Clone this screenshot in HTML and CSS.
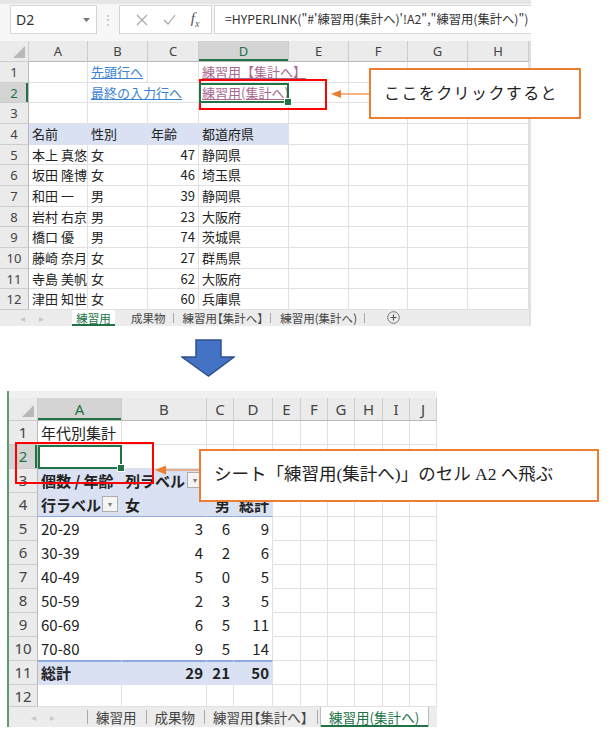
FILE: index.html
```html
<!DOCTYPE html>
<html lang="ja">
<head>
    <meta charset="UTF-8">
    <title>HYPERLINK 練習用</title>
    <link rel="stylesheet" href="styles.css">
</head>
<body>

    <!-- Before: sheet 練習用 with the link -->
    <div class="shot shot-top">
        <div class="fbar">
            <div class="namebox">D2
                <svg class="caret" width="7" height="4" viewBox="0 0 7 4"><path d="M0 0h7L3.5 4z" fill="#777"/></svg>
            </div>
            <div class="fdots">⋮</div>
            <div class="fbtns">
                <svg width="12" height="12" viewBox="0 0 12 12"><path d="M1 1l10 10M11 1L1 11" stroke="#a8a8a8" stroke-width="1.2" fill="none"/></svg>
                <svg width="13" height="11" viewBox="0 0 13 11"><path d="M1 6l4 4 7-9" stroke="#a8a8a8" stroke-width="1.2" fill="none"/></svg>
                <span class="fx">f<sub>x</sub></span>
            </div>
            <div class="formula">=HYPERLINK("#'練習用(集計へ)'!A2","練習用(集計へ)")</div>
        </div>

        <div class="sheet sheet-top">
            <div class="corner"></div><div class="ch">A</div><div class="ch">B</div><div class="ch">C</div><div class="ch on">D</div><div class="ch">E</div><div class="ch">F</div><div class="ch">G</div><div class="ch">H</div>

            <div class="rh">1</div><div></div><div><span class="link">先頭行へ</span></div><div></div><div class="span2"><span class="visited">練習用【集計へ】</span></div><div></div><div></div><div></div>
            <div class="rh on">2</div><div></div><div class="span2"><span class="link">最終の入力行へ</span></div><div class="active"><span class="visited">練習用(集計へ)</span></div><div></div><div></div><div></div><div></div>
            <div class="rh">3</div><div></div><div></div><div></div><div></div><div></div><div></div><div></div><div></div>
            <div class="rh">4</div><div class="th">名前</div><div class="th">性別</div><div class="th">年齢</div><div class="th">都道府県</div><div></div><div></div><div></div><div></div>
            <div class="rh">5</div><div>本上 真悠子</div><div>女</div><div class="num">47</div><div>静岡県</div><div></div><div></div><div></div><div></div>
            <div class="rh">6</div><div>坂田 隆博</div><div>女</div><div class="num">46</div><div>埼玉県</div><div></div><div></div><div></div><div></div>
            <div class="rh">7</div><div>和田 一</div><div>男</div><div class="num">39</div><div>静岡県</div><div></div><div></div><div></div><div></div>
            <div class="rh">8</div><div>岩村 右京</div><div>男</div><div class="num">23</div><div>大阪府</div><div></div><div></div><div></div><div></div>
            <div class="rh">9</div><div>橋口 優</div><div>男</div><div class="num">74</div><div>茨城県</div><div></div><div></div><div></div><div></div>
            <div class="rh">10</div><div>藤崎 奈月</div><div>女</div><div class="num">27</div><div>群馬県</div><div></div><div></div><div></div><div></div>
            <div class="rh">11</div><div>寺島 美帆</div><div>女</div><div class="num">62</div><div>大阪府</div><div></div><div></div><div></div><div></div>
            <div class="rh">12</div><div>津田 知世</div><div>女</div><div class="num">60</div><div>兵庫県</div><div></div><div></div><div></div><div></div>
        </div>

        <div class="tabs tabs-top">
            <div class="tab-nav"><span>◂</span><span>▸</span></div>
            <div class="tab current">練習用</div>
            <div class="tab">成果物</div>
            <div class="tab">練習用【集計へ】</div>
            <div class="tab">練習用(集計へ)</div>
            <div class="tab-add">
                <svg width="13" height="13" viewBox="0 0 13 13"><circle cx="6.5" cy="6.5" r="5.8" stroke="#777" fill="none"/><path d="M6.5 3.5v6M3.5 6.5h6" stroke="#555" stroke-width="1.2"/></svg>
            </div>
        </div>

        <!-- annotations -->
        <div class="redbox redbox-1"></div>
        <svg class="pointer pointer-1" width="40" height="10" viewBox="0 0 40 10"><path d="M0 5l10-4v8z" fill="#ed7d31"/><path d="M9 5h31" stroke="#ed7d31" stroke-width="1.2"/></svg>
        <div class="callout callout-1">ここをクリックすると</div>
    </div>

    <div class="down-arrow">
        <svg width="54" height="38" viewBox="0 0 54 38"><polygon points="15,1 40,1 40,18 53,18 27.5,37 1,18 15,18" fill="#4472c4" stroke="#2f528f" stroke-width="1.5"/></svg>
    </div>

    <!-- After: sheet 練習用(集計へ) -->
    <div class="shot shot-bottom">
        <div class="sheet-strip"></div>
        <div class="sheet sheet-bottom">
            <div class="corner"></div><div class="ch on">A</div><div class="ch">B</div><div class="ch">C</div><div class="ch">D</div><div class="ch">E</div><div class="ch">F</div><div class="ch">G</div><div class="ch">H</div><div class="ch">I</div><div class="ch">J</div>

            <div class="rh">1</div><div>年代別集計</div><div></div><div></div><div></div><div></div><div></div><div></div><div></div><div></div><div></div>
            <div class="rh on">2</div><div class="active"></div><div></div><div></div><div></div><div></div><div></div><div></div><div></div><div></div><div></div>
            <div class="rh">3</div><div class="pv-h b">個数 / 年齢</div><div class="pv-h b drop">列ラベル<span class="pv-btn">▾</span></div><div class="pv-h"></div><div class="pv-h end"></div><div></div><div></div><div></div><div></div><div></div><div></div>
            <div class="rh">4</div><div class="pv-h pv-line b drop">行ラベル<span class="pv-btn">▾</span></div><div class="pv-h pv-line b">女</div><div class="pv-h pv-line b num">男</div><div class="pv-h pv-line end b num">総計</div><div></div><div></div><div></div><div></div><div></div><div></div>
            <div class="rh">5</div><div class="pv">20-29</div><div class="pv num">3</div><div class="pv num">6</div><div class="pv end num">9</div><div></div><div></div><div></div><div></div><div></div><div></div>
            <div class="rh">6</div><div class="pv">30-39</div><div class="pv num">4</div><div class="pv num">2</div><div class="pv end num">6</div><div></div><div></div><div></div><div></div><div></div><div></div>
            <div class="rh">7</div><div class="pv">40-49</div><div class="pv num">5</div><div class="pv num">0</div><div class="pv end num">5</div><div></div><div></div><div></div><div></div><div></div><div></div>
            <div class="rh">8</div><div class="pv">50-59</div><div class="pv num">2</div><div class="pv num">3</div><div class="pv end num">5</div><div></div><div></div><div></div><div></div><div></div><div></div>
            <div class="rh">9</div><div class="pv">60-69</div><div class="pv num">6</div><div class="pv num">5</div><div class="pv end num">11</div><div></div><div></div><div></div><div></div><div></div><div></div>
            <div class="rh">10</div><div class="pv pv-last">70-80</div><div class="pv pv-last num">9</div><div class="pv pv-last num">5</div><div class="pv pv-last end num">14</div><div></div><div></div><div></div><div></div><div></div><div></div>
            <div class="rh">11</div><div class="pv-t b">総計</div><div class="pv-t b num">29</div><div class="pv-t b num">21</div><div class="pv-t end b num">50</div><div></div><div></div><div></div><div></div><div></div><div></div>
            <div class="rh">12</div><div></div><div></div><div></div><div></div><div></div><div></div><div></div><div></div><div></div><div></div>
        </div>

        <div class="tabs tabs-bottom">
            <div class="tab-nav"><span>◂</span><span>▸</span></div>
            <div class="tab">練習用</div>
            <div class="tab">成果物</div>
            <div class="tab">練習用【集計へ】</div>
            <div class="tab current">練習用(集計へ)</div>
        </div>

        <div class="redbox redbox-2"></div>
        <svg class="pointer pointer-2" width="46" height="10" viewBox="0 0 46 10"><path d="M0 5l11-4.5v9z" fill="#ed7d31"/><path d="M10 5h36" stroke="#ed7d31" stroke-width="1.2"/></svg>
        <div class="callout callout-2">シート「練習用(集計へ)」のセル A2 へ飛ぶ</div>
    </div>

</body>
</html>
```

FILE: styles.css
```css
* {
    box-sizing: border-box;
}

body {
    margin: 0;
    background: #fff;
    color: #222;
    font-family: "Noto Sans CJK JP", sans-serif;
}

.shot {
    position: relative;
}

.shot-top {
    width: 531px;
}

/* Formula bar */
.fbar {
    height: 41px;
    border-top: 4px solid #e6e6e6;
    background: #f7f7f7;
    display: flex;
    align-items: flex-start;
    padding-top: 1px;
}

.namebox {
    margin-left: 10px;
    width: 87px;
    height: 29px;
    background: #fff;
    border: 1px solid #d6d6d6;
    display: flex;
    align-items: center;
    justify-content: space-between;
    padding: 0 6px 0 5px;
    font: 14px "Noto Sans", sans-serif;
    color: #333;
}

.fdots {
    width: 22px;
    height: 29px;
    line-height: 29px;
    text-align: center;
    color: #c4c4c4;
    font-size: 14px;
}

.fbtns {
    width: 93px;
    height: 29px;
    background: #fff;
    border: 1px solid #d6d6d6;
    display: flex;
    align-items: center;
    justify-content: space-around;
    padding: 0 4px 0 8px;
}

.fx {
    font: italic 15px "Liberation Serif", serif;
    color: #555;
}

.fx sub {
    font-size: 10px;
}

.formula {
    margin-left: 2px;
    flex: 1;
    height: 29px;
    background: #fff;
    border: 1px solid #d6d6d6;
    border-right: none;
    padding-left: 10px;
    line-height: 27px;
    font-size: 12.3px;
    white-space: nowrap;
    overflow: hidden;
    color: #333;
}

/* Grid */
.sheet {
    display: grid;
    background: #fff;
}

.sheet > div {
    border-right: 1px solid #e1e1e1;
    border-bottom: 1px solid #e1e1e1;
    white-space: nowrap;
    overflow: hidden;
    padding: 0 3px;
}

.sheet-top {
    grid-template-columns: 29px 59px 60px 51px 90px 60px 59px 60px 61px;
    grid-template-rows: 21px repeat(12, 20.67px);
    font-size: 13px;
    line-height: 20px;
    border-right: 2px solid #e1e1e1;
}

.sheet-bottom {
    grid-template-columns: 29px 84px 85px 27px 39px 28px 27px 27px 28px 27px 27px;
    grid-template-rows: 23px repeat(11, 24px) 22px;
    font-size: 15px;
    line-height: 23px;
}

.sheet .corner,
.sheet .ch,
.sheet .rh {
    background: #ebebeb;
    color: #444;
    font-family: "Noto Sans", sans-serif;
    text-align: center;
    border-color: #cdcdcd;
}

.sheet .ch {
    border-bottom-color: #b8b8b8;
}

.sheet .rh {
    padding: 0;
    border-right-color: #b8b8b8;
}

.corner {
    position: relative;
}

.corner::after {
    content: "";
    position: absolute;
    right: 3px;
    bottom: 3px;
    border-style: solid;
    border-width: 0 0 12px 12px;
    border-color: transparent transparent #b9b9b9 transparent;
}

.sheet .ch.on {
    background: #d4d4d4;
    color: #217346;
    box-shadow: inset 0 -2px #217346;
}

.sheet .rh.on {
    background: #d4d4d4;
    color: #217346;
    box-shadow: inset -2px 0 #217346;
}

.span2 {
    grid-column: span 2;
}

.num {
    text-align: right;
}

.b {
    font-weight: bold;
}

.link {
    color: #3b83d0;
    text-decoration: underline;
}

.visited {
    color: #a8698f;
    text-decoration: underline;
}

.sheet .active {
    position: relative;
    overflow: visible;
    outline: 2px solid #217346;
    outline-offset: -2px;
    z-index: 1;
}

.active::after {
    content: "";
    position: absolute;
    right: -4px;
    bottom: -4px;
    width: 6px;
    height: 6px;
    background: #217346;
    border: 1px solid #fff;
}

.sheet .th {
    background: #d9e1f2;
    border-color: #d9e1f2;
}

/* Pivot table */
.sheet .pv-h,
.sheet .pv-t {
    background: #d9e1f2;
    border-color: #d9e1f2;
}

.sheet .pv-line {
    border-bottom-color: #8ea9db;
}

.sheet .pv-t {
    border-top: 1px solid #8ea9db;
    line-height: 22px;
}

.sheet .pv {
    border-color: #fff;
}

.sheet .pv-last {
    border-bottom-color: #8ea9db;
}

.sheet .end {
    border-right-color: #e1e1e1;
}

.drop {
    display: flex;
    align-items: center;
    justify-content: space-between;
    padding-right: 2px;
}

.pv-btn {
    width: 16px;
    height: 16px;
    border: 1px solid #aeaeae;
    background: #f4f4f4;
    font-size: 8px;
    line-height: 14px;
    text-align: center;
    color: #777;
    font-weight: normal;
}

/* Sheet tabs */
.tabs {
    display: flex;
    align-items: stretch;
    background: #ececec;
    color: #444;
    white-space: nowrap;
    font-feature-settings: "palt";
}

.tab-nav {
    display: flex;
    align-items: center;
    color: #c9c9c9;
    font-size: 10px;
}

.tab {
    position: relative;
    display: flex;
    align-items: center;
    justify-content: center;
}

.tab::after {
    content: "";
    position: absolute;
    right: 0;
    top: 3px;
    bottom: 3px;
    border-right: 1px solid #a9a9a9;
}

.tab.current {
    background: #fff;
    color: #217346;
    box-shadow: inset 0 -2px #217346;
}

.tab.current::after {
    display: none;
}

.tabs-top {
    height: 16px;
    font-size: 11.5px;
    border-right: 2px solid #e1e1e1;
}

.tabs-top .tab-nav {
    width: 72px;
    padding-left: 20px;
    gap: 14px;
}

.tabs-top .tab {
    padding: 0 8px 0 9px;
}

.tabs-top .tab.current {
    width: 43px;
    margin-right: 7px;
    padding: 0;
}

.tab-add {
    display: flex;
    align-items: center;
    padding-left: 22px;
}

.shot-bottom {
    margin-left: 7px;
    width: 430px;
    border-left: 2px solid #5a9e6e;
}

.sheet-strip {
    height: 7px;
    background: #f0f0f0;
}

.tabs-bottom {
    height: 20px;
    font-size: 13.5px;
}

.tabs-bottom .tab-nav {
    width: 79px;
    padding-left: 22px;
    gap: 14px;
    border-right: 1px solid #a9a9a9;
    margin: 3px 0;
}

.tabs-bottom .tab {
    padding: 0 10px 0 8px;
}

.tabs-bottom .tab.current {
    margin-left: 2px;
    width: 109px;
    padding: 0;
    border-left: 1px solid #bdbdbd;
    border-right: 1px solid #bdbdbd;
}

/* Annotations */
.down-arrow {
    padding: 13px 0 14px 181px;
    line-height: 0;
}

.redbox {
    position: absolute;
    border: 2.5px solid #ff0000;
}

.redbox-1 {
    left: 199px;
    top: 79px;
    width: 128px;
    height: 31px;
}

.redbox-2 {
    left: 6px;
    top: 51px;
    width: 139px;
    height: 42px;
}

.pointer {
    position: absolute;
}

.pointer-1 {
    left: 331px;
    top: 89px;
}

.pointer-2 {
    left: 146px;
    top: 74px;
}

.callout {
    position: absolute;
    background: #fff;
    border: 2px solid #ed7d31;
    font-family: "Liberation Serif", "Noto Sans CJK JP", serif;
    color: #222;
    white-space: nowrap;
}

.callout-1 {
    left: 369px;
    top: 68px;
    width: 212px;
    height: 51px;
    padding: 10px 0 0 13px;
    font-size: 16px;
    letter-spacing: 1.4px;
}

.callout-2 {
    left: 190px;
    top: 58px;
    width: 400px;
    height: 53px;
    padding: 9px 0 0 13px;
    font-size: 17.5px;
}
```
